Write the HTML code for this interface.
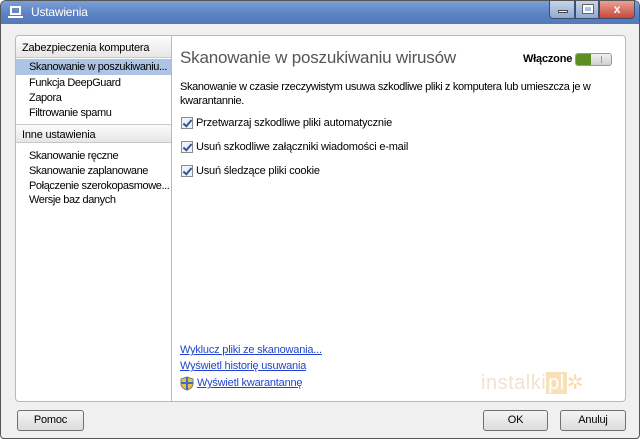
<!DOCTYPE html>
<html><head><style>
*{margin:0;padding:0;box-sizing:border-box}
body{width:640px;height:439px;overflow:hidden;font-family:"Liberation Sans",sans-serif;font-size:11px;color:#000;background:#fff;letter-spacing:-0.2px}
div,a{white-space:nowrap}
.win{position:absolute;left:0;top:0;width:640px;height:439px;background:#f0f0f0;border:1px solid #555;border-radius:6px 6px 4px 4px;overflow:hidden}
.title{position:absolute;left:0;top:0;width:638px;height:23px;background:linear-gradient(#7b9fd6,#5a80c0 60%,#5479b8);}
.title .t{position:absolute;left:30px;top:4px;color:#fff;font-size:12px}
.ic{position:absolute;left:9px;top:5px;width:11px;height:9px;border:2px solid #fff}
.ic2{position:absolute;left:7px;top:15px;width:15px;height:2px;background:#fff}
.wb{position:absolute;top:0;height:18px;border:1px solid #3c4f70;border-top:none}
.panel{position:absolute;left:14px;top:34px;width:611px;height:367px;background:#fff;border:1px solid #b9b9b9;border-radius:4px}
.nav{position:absolute;left:0;top:0;width:156px;height:365px;border-right:1px solid #b9b9b9}
.hd{position:absolute;left:0;width:155px;height:20px;background:linear-gradient(#fbfbfb,#e6e6e6);border-bottom:1px solid #c8c8c8;padding:4px 0 0 6px}
.it{position:absolute;left:13px;letter-spacing:-0.4px}
.sel{position:absolute;left:0;top:23px;width:155px;height:16px;background:#adc4e4}
h1{position:absolute;font-weight:normal;font-size:17px;color:#555;letter-spacing:-0.2px}
.cb{position:absolute;left:180px;width:12px;height:12px;border:1px solid #8a8a8a;background:#eef2f8}
.cb:after{content:"";position:absolute;left:3px;top:0px;width:3px;height:7px;border:solid #33559a;border-width:0 2px 2px 0;transform:rotate(40deg)}
.lbl{position:absolute;left:195px}
a{position:absolute;color:#2244cc;text-decoration:underline}
.btn{position:absolute;top:409px;height:21px;border:1px solid #707070;border-radius:3px;background:linear-gradient(#f4f4f4,#dcdcdc);text-align:center;padding-top:3px}
</style></head><body>
<div class="win">
<div class="title"><div class="ic"></div><div class="ic2"></div><div class="t">Ustawienia</div>
<div class="wb" style="left:548px;width:26px;background:linear-gradient(#c6d4ea,#8fa9d3);border-radius:0 0 0 4px"><div style="position:absolute;left:8px;top:9px;width:10px;height:3px;background:#fff;border:1px solid #444"></div></div>
<div class="wb" style="left:574px;width:24px;background:linear-gradient(#c6d4ea,#8fa9d3)"><div style="position:absolute;left:7px;top:4px;width:10px;height:8px;border:2px solid #fff;outline:1px solid #666"></div></div>
<div class="wb" style="left:598px;width:36px;background:linear-gradient(#e8a293,#c9473a);border-radius:0 0 4px 0;color:#fff;font-weight:bold;text-align:center;font-size:12px;padding-top:1px">x</div>
</div>
<div class="panel">
<div class="nav">
<div class="hd" style="top:2px">Zabezpieczenia komputera</div>
<div class="sel"></div>
<div class="it" style="top:25px">Skanowanie w poszukiwaniu...</div>
<div class="it" style="top:41px">Funkcja DeepGuard</div>
<div class="it" style="top:56px">Zapora</div>
<div class="it" style="top:71px">Filtrowanie spamu</div>
<div class="hd" style="top:88px;border-top:1px solid #c8c8c8;height:19px">Inne ustawienia</div>
<div class="it" style="top:114px">Skanowanie ręczne</div>
<div class="it" style="top:129px">Skanowanie zaplanowane</div>
<div class="it" style="top:144px">Połączenie szerokopasmowe...</div>
<div class="it" style="top:158px">Wersje baz danych</div>
</div>
</div>
<h1 style="top:47px;left:179px">Skanowanie w poszukiwaniu wirusów</h1>
<div style="position:absolute;left:522px;top:52px;font-weight:bold;font-size:11px">Włączone</div>
<div style="position:absolute;left:574px;top:52px;width:37px;height:13px;border:1px solid #999;border-radius:3px;background:linear-gradient(#f0f0f0,#cfcfcf)"><div style="position:absolute;left:0;top:0;width:15px;height:11px;background:#5b8f22;border-radius:2px 0 0 2px"></div><div style="position:absolute;left:25px;top:2px;width:1px;height:7px;background:#999"></div></div>
<div style="position:absolute;left:179px;top:79px;line-height:14px;letter-spacing:-0.35px">Skanowanie w czasie rzeczywistym usuwa szkodliwe pliki z komputera lub umieszcza je w<br>kwarantannie.</div>
<div class="cb" style="top:116px"></div><div class="lbl" style="top:116px">Przetwarzaj szkodliwe pliki automatycznie</div>
<div class="cb" style="top:140px"></div><div class="lbl" style="top:140px">Usuń szkodliwe załączniki wiadomości e-mail</div>
<div class="cb" style="top:164px"></div><div class="lbl" style="top:164px">Usuń śledzące pliki cookie</div>
<a style="left:179px;top:343px">Wyklucz pliki ze skanowania...</a>
<a style="left:179px;top:359px">Wyświetl historię usuwania</a>
<svg style="position:absolute;left:179px;top:375px" width="14" height="15" viewBox="0 0 14 15"><path d="M7 1 L13 3 V8 C13 11 10 13 7 14 C4 13 1 11 1 8 V3Z" fill="#e6c24a" stroke="#7a7a7a"/><path d="M7 1 V14 M1 7 H13" stroke="#3b6fc4" stroke-width="2"/></svg>
<a style="left:196px;top:376px">Wyświetl kwarantannę</a>
<div style="position:absolute;left:480px;top:369px;font-size:20px;color:#f0e2cf;letter-spacing:0.5px">instalki<span style="background:#f8e0b8;color:#fff;padding:0 2px">pl</span><span style="color:#f8dcb0">✲</span></div>
<div class="btn" style="left:16px;width:67px">Pomoc</div>
<div class="btn" style="left:482px;width:65px">OK</div>
<div class="btn" style="left:559px;width:66px">Anuluj</div>
</div>
</body></html>
